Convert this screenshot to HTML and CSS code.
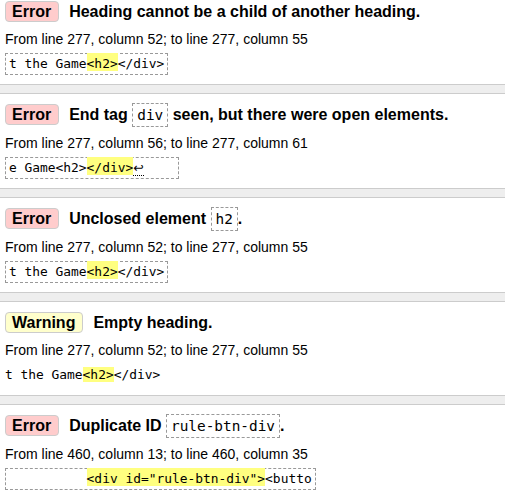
FILE: index.html
```html
<!DOCTYPE html>
<html lang="en">
<head>
<meta charset="utf-8">
<title>Validation messages</title>
<link rel="stylesheet" href="styles.css">
</head>
<body>
<ol class="messages">
  <li class="msg error">
    <p class="head"><strong class="badge">Error</strong>Heading cannot be a child of another heading.</p>
    <p class="loc">From line 277, column 52; to line 277, column 55</p>
    <p class="extract"><code>t the Game<span class="hl">&lt;h2&gt;</span>&lt;/div&gt;</code></p>
  </li>
  <li class="msg error">
    <p class="head"><strong class="badge">Error</strong>End tag <code>div</code> seen, but there were open elements.</p>
    <p class="loc">From line 277, column 56; to line 277, column 61</p>
    <p class="extract"><code>e Game&lt;h2&gt;<span class="hl">&lt;/div&gt;</span><span class="lf">↩</span>    </code></p>
  </li>
  <li class="msg error">
    <p class="head"><strong class="badge">Error</strong>Unclosed element <code>h2</code>.</p>
    <p class="loc">From line 277, column 52; to line 277, column 55</p>
    <p class="extract"><code>t the Game<span class="hl">&lt;h2&gt;</span>&lt;/div&gt;</code></p>
  </li>
  <li class="msg warning">
    <p class="head"><strong class="badge">Warning</strong>Empty heading.</p>
    <p class="loc">From line 277, column 52; to line 277, column 55</p>
    <p class="extract plain"><code>t the Game<span class="hl">&lt;h2&gt;</span>&lt;/div&gt;</code></p>
  </li>
  <li class="msg error">
    <p class="head"><strong class="badge">Error</strong>Duplicate ID <code>rule-btn-div</code>.</p>
    <p class="loc">From line 460, column 13; to line 460, column 35</p>
    <p class="extract"><code>          <span class="hl">&lt;div id="rule-btn-div"&gt;</span>&lt;butto</code></p>
  </li>
</ol>
</body>
</html>
```
FILE: styles.css
```css
body {
  margin: 0;
  background: #eeeeee;
  font-family: "Liberation Sans", Arial, sans-serif;
  color: #000;
}

.messages {
  list-style: none;
  margin: -10px 0 0;
  padding: 0;
}

.msg {
  background: #fff;
  border-top: 1px solid #cccccc;
  border-bottom: 1px solid #cccccc;
  padding: 10px 5px 9px;
  margin-bottom: 8px;
}

.head {
  margin: 0;
  font-size: 16px;
  font-weight: bold;
  line-height: 21px;
}

.badge {
  display: inline-block;
  vertical-align: top;
  line-height: 17px;
  padding: 1px 7px 1px 6px;
  border: 1px solid #cccccc;
  border-radius: 4px;
  margin-right: 10px;
}

.error .badge {
  background: #ffcccc;
}

.warning .badge {
  background: #ffffcc;
}

.head code {
  font-family: "DejaVu Sans Mono", monospace;
  font-weight: normal;
  font-size: 14.4px;
  border: 1px dashed #999999;
  padding: 3px 4px;
}

.loc {
  margin: 8px 0 0;
  font-size: 14px;
  line-height: 18px;
}

.extract {
  display: flex;
  margin: 5px 0 0;
}

.extract code {
  font-family: "DejaVu Sans Mono", monospace;
  font-size: 12.9px;
  line-height: 14px;
  padding: 3px;
  border: 1px dashed #999999;
  white-space: pre;
}

.extract.plain code {
  border-color: transparent;
  border-left: 0;
  padding-left: 0;
}

.hl {
  background: #ffff80;
  padding-top: 3px;
}

.extract.plain .hl {
  padding-top: 0;
}

.lf {
  font-family: "DejaVu Sans", sans-serif;
  font-size: 12.5px;
  border-bottom: 1px dotted #000;
}
```
